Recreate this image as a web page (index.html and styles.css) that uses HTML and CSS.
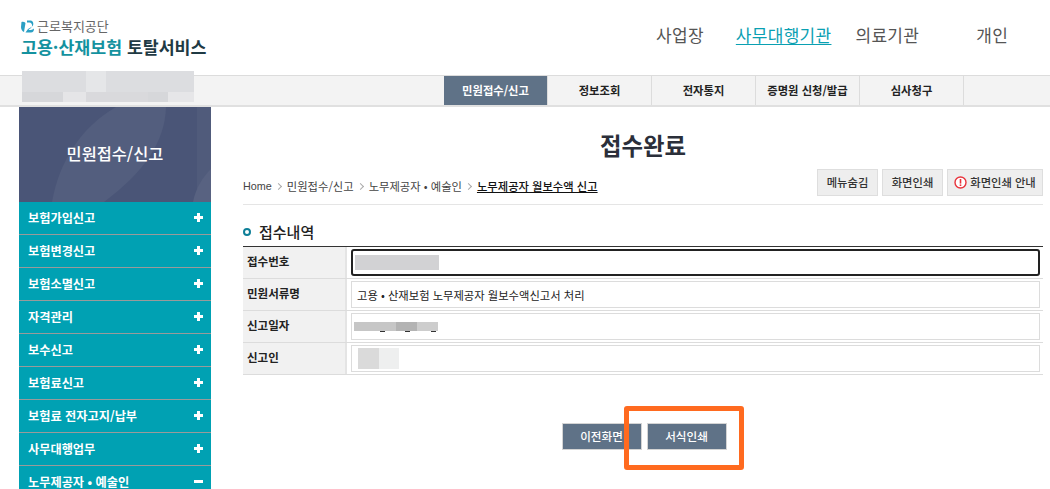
FILE: index.html
```html
<!DOCTYPE html>
<html lang="ko">
<head>
<meta charset="utf-8">
<title>접수완료</title>
<link rel="stylesheet" href="styles.css">
</head>
<body>
<div class="page">
  <header class="top">
    <div class="logo">
      <div class="logo-org">
        <svg class="logo-mark" width="13" height="13" viewBox="0 0 13 13"><path d="M0.5 2C2 1.5 3.5 2 4.5 3L3 12C1 11.5 0 9 0 7Z" fill="#2a9fc4"/><path d="M6 0.5H9.5C12.5 0.5 13.5 5 10.5 7L7 9L4.5 12.5H10C12 12.5 13 11 13 8.5C11 10 9 10.2 7.5 9.8L10 8C12 6 11 2.5 8.5 2.5H6Z" fill="#2a9fc4"/></svg>
        <span>근로복지공단</span>
      </div>
      <div class="logo-name"><span class="logo-teal">고용·산재보험</span> <span class="logo-dark">토탈서비스</span></div>
    </div>
    <nav class="top-nav">
      <a class="top-link t1">사업장</a>
      <a class="top-link t2 active">사무대행기관</a>
      <a class="top-link t3">의료기관</a>
      <a class="top-link t4">개인</a>
    </nav>
  </header>
  <div class="bar">
    <div class="tabs">
      <a class="tab current">민원접수/신고</a>
      <a class="tab">정보조회</a>
      <a class="tab">전자통지</a>
      <a class="tab">증명원 신청/발급</a>
      <a class="tab">심사청구</a>
    </div>
  </div>
  <div class="blur-top"></div>
  <div class="main">
    <aside class="side">
      <div class="banner">
        <svg class="banner-art" width="192" height="95" viewBox="0 0 192 95"><path d="M33 95C40 55 62 20 97 0H147C146 35 125 65 85 95Z" fill="#535e7e"/><rect x="178" width="14" height="95" fill="#505b7b"/><path d="M174 95C177 80 184 70 192 62V95Z" fill="#586281"/></svg>
        <span class="banner-title">민원접수/신고</span>
      </div>
      <ul class="menu">
        <li class="menu-item"><span class="menu-text">보험가입신고</span><b class="sign plus"></b></li>
        <li class="menu-item"><span class="menu-text">보험변경신고</span><b class="sign plus"></b></li>
        <li class="menu-item"><span class="menu-text">보험소멸신고</span><b class="sign plus"></b></li>
        <li class="menu-item"><span class="menu-text">자격관리</span><b class="sign plus"></b></li>
        <li class="menu-item"><span class="menu-text">보수신고</span><b class="sign plus"></b></li>
        <li class="menu-item"><span class="menu-text">보험료신고</span><b class="sign plus"></b></li>
        <li class="menu-item"><span class="menu-text">보험료 전자고지/납부</span><b class="sign plus"></b></li>
        <li class="menu-item"><span class="menu-text">사무대행업무</span><b class="sign plus"></b></li>
        <li class="menu-item"><span class="menu-text">노무제공자 • 예술인</span><b class="sign"></b></li>
      </ul>
    </aside>
    <main class="content">
      <h1 class="title">접수완료</h1>
      <div class="crumb-row">
        <div class="crumbs">
          <span class="crumb-home">Home</span><i class="sep"></i><span>민원접수/신고</span><i class="sep"></i><span>노무제공자 • 예술인</span><i class="sep"></i><span class="crumb-now">노무제공자 월보수액 신고</span>
        </div>
        <div class="tools">
          <button class="tool">메뉴숨김</button>
          <button class="tool">화면인쇄</button>
          <button class="tool tool-info"><svg width="13" height="13" viewBox="0 0 13 13"><circle cx="6.5" cy="6.5" r="5.5" fill="#fff" stroke="#e8343c" stroke-width="1.4"/><rect x="5.7" y="3" width="1.6" height="4.6" fill="#e8343c"/><rect x="5.7" y="8.4" width="1.6" height="1.6" fill="#e8343c"/></svg>화면인쇄 안내</button>
        </div>
      </div>
      <h2 class="section"><i class="dot"></i>접수내역</h2>
      <div class="form">
        <div class="row">
          <div class="label">접수번호</div>
          <div class="value"><div class="field focused"><i class="mask mask-no"></i></div></div>
        </div>
        <div class="row">
          <div class="label">민원서류명</div>
          <div class="value"><div class="field">고용 • 산재보험 노무제공자 월보수액신고서 처리</div></div>
        </div>
        <div class="row">
          <div class="label">신고일자</div>
          <div class="value"><div class="field"><i class="mask mask-date"></i></div></div>
        </div>
        <div class="row">
          <div class="label">신고인</div>
          <div class="value"><div class="field"><i class="mask mask-name"></i></div></div>
        </div>
      </div>
      <div class="actions">
        <button class="act">이전화면</button>
        <button class="act">서식인쇄</button>
      </div>
    </main>
  </div>
  <div class="callout"></div>
</div>
</body>
</html>
```

FILE: styles.css
```css
* { box-sizing: border-box; }
html, body { margin: 0; padding: 0; background: #fff; }
body { font-family: "Noto Sans CJK KR", "Noto Sans", sans-serif; color: #222; }
ul { list-style: none; margin: 0; padding: 0; }
h1, h2 { margin: 0; }
.page { position: relative; width: 1050px; height: 489px; overflow: hidden; }

.top { height: 75px; display: flex; align-items: flex-start; }
.logo { margin-left: 21px; padding-top: 18px; width: 300px; }
.logo-org { display: flex; align-items: center; gap: 3px; font-size: 13px; line-height: 16px; color: #666; }
.logo-name { font-size: 17.3px; line-height: 22px; font-weight: 700; margin-top: 2px; white-space: nowrap; }
.logo-teal { color: #14929f; }
.logo-dark { color: #1f3a44; }

.top-nav { flex: 1; height: 75px; font-size: 17px; color: #555; display: flex; padding-left: 335px; padding-top: 23px; line-height: 24px; }
.top-link { letter-spacing: .3px; white-space: nowrap; }
.t2 { margin-left: 32px; }
.t3 { margin-left: 24px; }
.t4 { margin-left: 57px; }
.active { color: #0aa0b2; text-decoration: underline; text-underline-offset: 2px; }

.bar { height: 32px; background: #f3f3f3; border-top: 1px solid #dcdcdc; border-bottom: 2px solid #e0e0e0; padding-left: 444px; }
.tabs { display: flex; height: 29px; }
.tab { width: 104px; flex: none; text-align: center; font-size: 11.3px; line-height: 29px; font-weight: 700; color: #222; border-right: 1px solid #dcdcdc; white-space: nowrap; }
.tab.current { background: #5f7287; color: #fff; }

.blur-top { position: absolute; left: 22px; top: 71px; width: 172px; height: 31px; background:
  linear-gradient(90deg, #d6d7da 0 24%, #e5e5e7 24% 37%, #d9d9dc 37% 73%, #d6d7da 73% 85%, #e6e6e8 85% 100%) 0 100% / 100% 10px no-repeat,
  linear-gradient(90deg, #dcdde0 0 37%, #e5e6e8 37% 49%, #dcdde0 49% 100%); }

.main { display: flex; padding-left: 19px; }
.side { width: 192px; flex: none; }
.banner { position: relative; height: 95px; background: #4a5577; display: flex; align-items: center; justify-content: center; }
.banner-art { position: absolute; left: 0; top: 0; }
.banner-title { position: relative; color: #fff; font-size: 16.4px; font-weight: 500; padding-bottom: 3px; }
.menu-item { height: 33px; background: #00a1b3; border-bottom: 1px solid #9a9a9a; color: #fff; font-size: 12.2px; font-weight: 700; display: flex; align-items: center; justify-content: space-between; padding: 0 8px 2px 9px; }
.menu-text { padding-top: 2px; }
.sign { position: relative; width: 9px; height: 3px; background: #fff; display: block; }
.sign.plus::after { content: ""; position: absolute; left: 3px; top: -3px; width: 3px; height: 9px; background: #fff; }

.content { width: 800px; margin-left: 32px; flex: none; }
.title { text-align: center; font-size: 23.4px; line-height: 32px; font-weight: 700; color: #2b2f3a; margin-top: 22px; }
.crumb-row { display: flex; justify-content: space-between; align-items: flex-start; height: 38px; margin-top: 6px; border-bottom: 1px solid #e5e5e5; }
.crumbs { display: flex; align-items: center; font-size: 11.3px; line-height: 16px; color: #444; margin-top: 11px; white-space: nowrap; }
.crumb-home { font-family: "Liberation Sans", sans-serif; font-size: 10.8px; }
.sep { width: 5px; height: 5px; border-top: 1px solid #aaa; border-right: 1px solid #aaa; transform: rotate(45deg); margin: 0 6px 0 4px; }
.crumb-now { color: #111; text-decoration: underline; font-weight: 500; }
.tools { display: flex; gap: 4px; margin-top: 2px; }
.tool { height: 27px; border: 1px solid #dedede; background: #eeeeee; color: #333; font: 500 11.3px/1 "Noto Sans CJK KR", sans-serif; padding: 0; width: 61px; display: flex; align-items: center; justify-content: center; gap: 3px; }
.tool-info { width: 96px; }

.section { display: flex; align-items: center; font-size: 15px; line-height: 18px; font-weight: 500; color: #222; margin-top: 15px; margin-bottom: 3px; height: 23px; }
.dot { width: 8px; height: 8px; border: 2.5px solid #0e7f98; border-radius: 50%; margin-right: 8px; background: #fff; }

.form { border-top: 1px solid #333; }
.row { display: flex; height: 32px; border-bottom: 1px solid #dcdcdc; }
.label { width: 104px; flex: none; background: #f1f1f1; border-right: 2px solid #e4e4e4; font-size: 11.5px; line-height: 28px; font-weight: 700; padding-left: 4px; color: #222; }
.value { flex: 1; padding: 2px 3px 2px 4px; }
.field { height: 27px; border: 1px solid #dcdcdc; font-size: 11.3px; line-height: 27px; padding-left: 5px; color: #222; position: relative; }
.field.focused { border: 2px solid #222; border-radius: 3px; line-height: 23px; }
.mask { position: absolute; display: block; }
.mask-no { left: 2px; top: 4px; width: 84px; height: 15px; background: #d2d2d4; }
.mask-date { left: 2px; top: 8px; width: 84px; height: 9px; background: linear-gradient(90deg, #c6c6c6 0 50%, #b3b3b3 50% 75%, #cdcdcd 75% 100%); }
.mask-date::after { content: ""; position: absolute; left: 0; top: 9px; width: 84px; height: 1px; background: linear-gradient(90deg, transparent 0 31%, #333 31% 37%, transparent 37% 61%, #333 61% 67%, transparent 67% 92%, #333 92% 98%, transparent 98%); }
.mask-name { left: 6px; top: 2px; width: 41px; height: 21px; background: linear-gradient(90deg, #dadada 0 51%, #eeefef 51% 100%); }

.actions { display: flex; justify-content: center; gap: 5px; margin-top: 48px; padding-left: 2px; }
.act { width: 80px; height: 27px; background: #5f7287; border: 1px solid #d4d4d4; color: #fff; font: 500 11.6px/1 "Noto Sans CJK KR", sans-serif; padding: 0; }

.callout { position: absolute; left: 624px; top: 406px; width: 120px; height: 64px; border: 5px solid #ff6a1f; border-radius: 3px; }
```
